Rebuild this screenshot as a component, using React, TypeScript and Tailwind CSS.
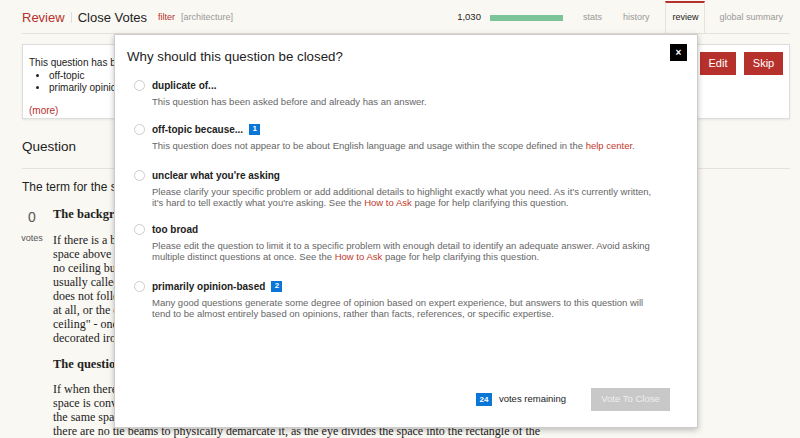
import * as React from "react";

const sans = { fontFamily: '"Liberation Sans", Arial, sans-serif' };
const serif = { fontFamily: '"Liberation Serif", "Times New Roman", serif' };

type Reason = {
  title: string;
  badge?: string;
  height: string;
  desc: React.ReactNode[];
};

const link = (t: string) => <span className="text-[#c0392b]">{t}</span>;

const reasons: Reason[] = [
  {
    title: "duplicate of...",
    height: "h-[44px]",
    desc: ["This question has been asked before and already has an answer."],
  },
  {
    title: "off-topic because...",
    badge: "1",
    height: "h-[46px]",
    desc: [
      <>
        This question does not appear to be about English language and usage within the scope defined in the {link("help center")}.
      </>,
    ],
  },
  {
    title: "unclear what you're asking",
    height: "h-[54px]",
    desc: [
      "Please clarify your specific problem or add additional details to highlight exactly what you need. As it's currently written,",
      <>
        it's hard to tell exactly what you're asking. See the {link("How to Ask")} page for help clarifying this question.
      </>,
    ],
  },
  {
    title: "too broad",
    height: "h-[57px]",
    desc: [
      "Please edit the question to limit it to a specific problem with enough detail to identify an adequate answer. Avoid asking",
      <>
        multiple distinct questions at once. See the {link("How to Ask")} page for help clarifying this question.
      </>,
    ],
  },
  {
    title: "primarily opinion-based",
    badge: "2",
    height: "h-[44px]",
    desc: [
      "Many good questions generate some degree of opinion based on expert experience, but answers to this question will",
      "tend to be almost entirely based on opinions, rather than facts, references, or specific expertise.",
    ],
  },
];

function Header() {
  return (
    <div className="flex h-[34px] items-center border-b border-[#e6e2da] pt-[2px]">
      <span className="text-[13px] text-[#b7312c]">Review</span>
      <span className="mx-[6px] h-[11px] w-px bg-[#ddd]" />
      <span className="text-[13px] text-[#222]">Close Votes</span>
      <span className="ml-[11px] text-[9px] text-[#b7312c]">filter</span>
      <span className="ml-[6px] text-[9px] text-[#999]">[architecture]</span>
      <div className="ml-auto flex h-full items-center text-[9px]">
        <span className="text-[9.5px] text-[#222]">1,030</span>
        <span className="ml-[9px] h-[6px] w-[73px] bg-[#7bc598]" />
        <span className="ml-[20px] text-[#999]">stats</span>
        <span className="ml-[21px] text-[#999]">history</span>
        <span className="ml-[16px] flex h-[32px] items-center self-end border-x border-t-2 border-x-[#e8e4dc] border-t-[#b7312c] px-[6px] pb-[1px] text-[#222]">
          review
        </span>
        <span className="ml-[14px] mr-[7px] text-[#999]">global summary</span>
      </div>
    </div>
  );
}

function ReviewBox() {
  return (
    <div className="mt-[10px] flex h-[75px] border border-[#ddd] bg-white pl-[6px] pr-[6px] shadow-[0_1px_2px_rgba(0,0,0,0.08)]">
      <div className="flex flex-1 flex-col pt-[12px] text-[10px] leading-[12px] text-[#222]">
        <div>This question has been put on hold as:</div>
        <ul className="ml-[20px] mt-[1px] list-disc">
          <li>off-topic</li>
          <li>primarily opinion-based</li>
        </ul>
        <div className="mt-auto mb-[1px] text-[#b7312c]">(more)</div>
      </div>
      <div className="flex gap-[8px] pt-[7px] text-[11px] text-white">
        <span className="flex h-[23px] w-[36px] items-center justify-center bg-[#b7312c]">Edit</span>
        <span className="flex h-[23px] w-[39px] items-center justify-center bg-[#b7312c]">Skip</span>
      </div>
    </div>
  );
}

function QuestionBody() {
  const lines1 = [
    "If there is a beam spanning from one side of a vaulted ceiling to the",
    "space above it is called a tie beam. But what if there is a vaulted",
    "no ceiling but the roof decking is exposed; such a vaulted ceiling is",
    "usually called a cathedral ceiling. What about one that",
    "does not follow the roof pitch, or where there is no roof",
    "at all, or the ceiling is lower and flat; some call it a",
    "ceiling\" - one that has lovely exposed rafters and",
    "decorated iron work on the underside.",
  ];
  const lines2 = [
    "If when there is a vaulted ceiling above a room, the",
    "space is converted into a loft, what do you call",
    "the same space; there is an attic, but",
    "there are no tie beams to physically demarcate it, as the eye divides the space into the rectangle of the",
  ];
  return (
    <div>
      <div className="mt-[18px] border-b border-[#e6e2da] pb-[11px] text-[13.5px] text-[#222]">Question</div>
      <div className="mt-[9px] text-[12px] text-[#222]">The term for the space above a vaulted ceiling</div>
      <div className="mt-[11px] flex">
        <div className="flex w-[20px] flex-col items-center text-[#555]">
          <span className="mt-[2px] text-[14px] leading-[16px]">0</span>
          <span className="mt-[7px] text-[9px]">votes</span>
        </div>
        <div className="ml-[11px] text-[12px] leading-[14px] text-[#222]" style={serif}>
          <div className="text-[12.5px] font-bold">The background</div>
          <div className="mt-[12px]">
            {lines1.map((l) => (
              <div key={l} className="whitespace-nowrap">{l}</div>
            ))}
          </div>
          <div className="mt-[12px] text-[12.5px] font-bold">The question</div>
          <div className="mt-[11px]">
            {lines2.map((l) => (
              <div key={l} className="whitespace-nowrap">{l}</div>
            ))}
          </div>
        </div>
      </div>
    </div>
  );
}

function Modal() {
  return (
    <div className="absolute left-[114px] top-[34px] flex h-[394px] w-[584px] flex-col border border-[#ccc] bg-white shadow-[0_2px_6px_rgba(0,0,0,0.25)]">
      <div className="flex items-start justify-between pl-[12px] pr-[10px] pt-[9px]">
        <div className="pt-[3px] text-[13.3px] text-[#222]">Why should this question be closed?</div>
        <span className="flex h-[17px] w-[17px] items-center justify-center bg-black text-[10px] font-bold text-white">
          ×
        </span>
      </div>
      <div className="mt-[12px] flex flex-col pl-[19px]">
        {reasons.map((r) => (
          <div key={r.title} className={`flex ${r.height}`}>
            <span className="mt-[1px] h-[11px] w-[11px] shrink-0 rounded-full border border-[#ccc] bg-white" />
            <div className="ml-[7px]">
              <div className="flex h-[13px] items-center text-[10px] font-bold text-[#222]">
                {r.title}
                {r.badge && (
                  <span className="ml-[6px] flex h-[11px] w-[11px] items-center justify-center bg-[#0a77d6] text-[8px] font-bold text-white">
                    {r.badge}
                  </span>
                )}
              </div>
              <div className="mt-[4px] text-[9.5px] leading-[11px] text-[#666]">
                {r.desc.map((d, i) => (
                  <div key={i} className="whitespace-nowrap">{d}</div>
                ))}
              </div>
            </div>
          </div>
        ))}
      </div>
      <div className="mt-auto mb-[16px] flex items-center justify-end pr-[27px]">
        <span className="flex h-[13px] w-[16px] items-center justify-center bg-[#0a77d6] text-[8px] font-bold text-white">24</span>
        <span className="ml-[7px] text-[9.5px] text-[#222]">votes remaining</span>
        <span className="ml-[25px] flex h-[23px] w-[79px] items-center justify-center bg-[#c8c8c8] text-[9.5px] text-[#eee]">
          Vote To Close
        </span>
      </div>
    </div>
  );
}

export default function App(): React.ReactElement {
  return (
    <div className="relative h-[438px] w-[800px] overflow-hidden bg-[#faf8f3]" style={sans}>
      <div className="pl-[22px] pr-[10px]">
        <Header />
        <ReviewBox />
        <QuestionBody />
      </div>
      <Modal />
    </div>
  );
}
